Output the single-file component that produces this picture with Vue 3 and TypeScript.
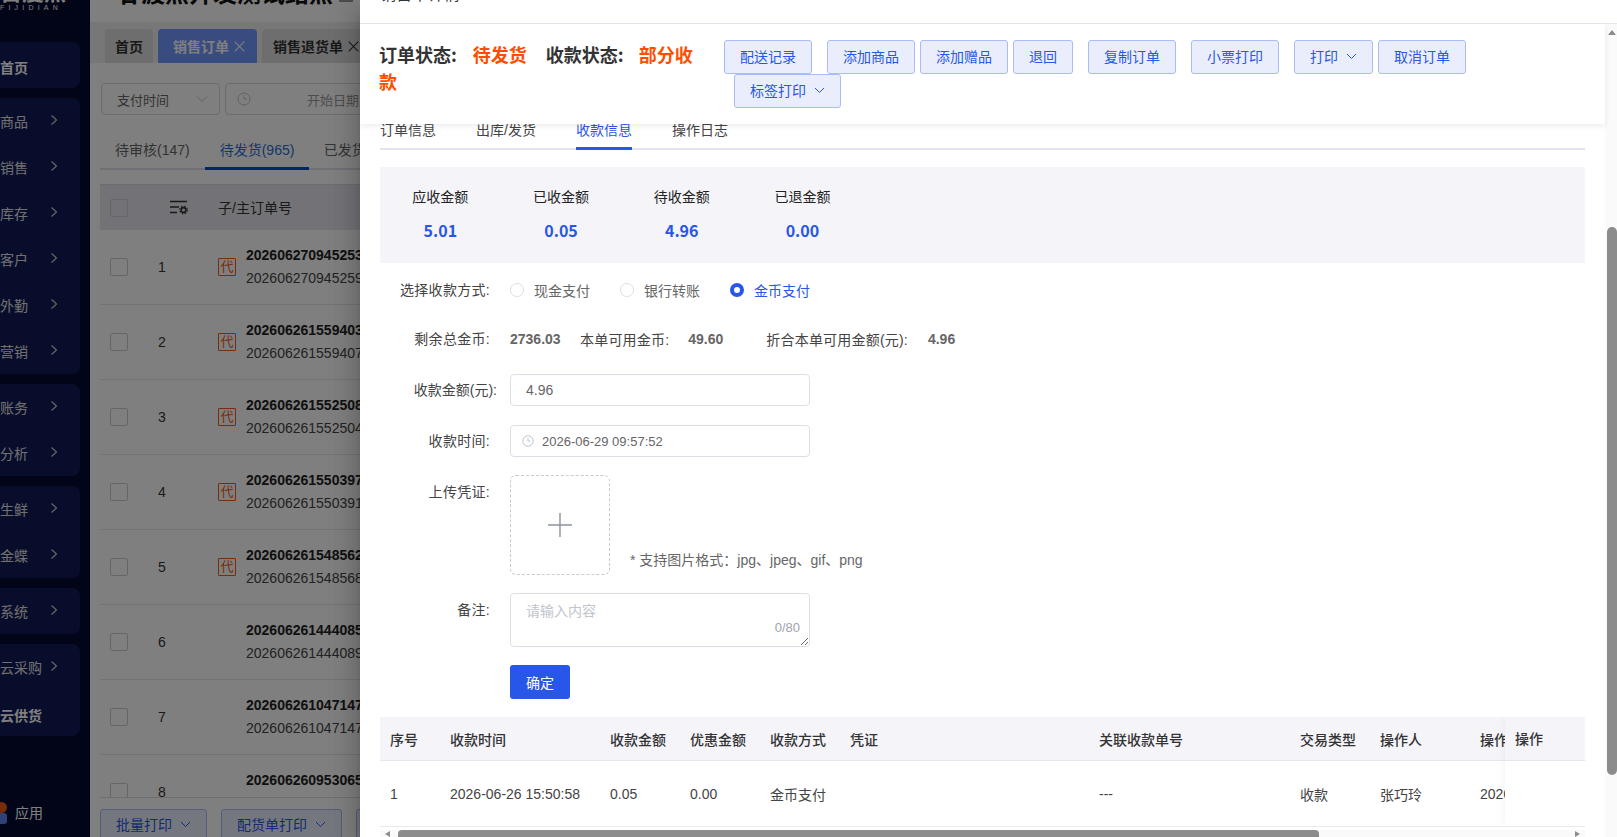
<script setup lang="ts">
const menuGroups: { label: string; arrow: boolean; bold?: boolean }[][] = [
  [{ label: '首页', arrow: false, bold: true }],
  ['商品', '销售', '库存', '客户', '外勤', '营销'].map((label) => ({ label, arrow: true })),
  ['账务', '分析'].map((label) => ({ label, arrow: true })),
  ['生鲜', '金蝶'].map((label) => ({ label, arrow: true })),
  [{ label: '系统', arrow: true }],
  [
    { label: '云采购', arrow: true },
    { label: '云供货', arrow: false, bold: true },
  ],
]

const orders = [
  { id: 1, agent: true, main: '202606270945253', sub: '202606270945259' },
  { id: 2, agent: true, main: '202606261559403', sub: '202606261559407' },
  { id: 3, agent: true, main: '202606261552508', sub: '202606261552504' },
  { id: 4, agent: true, main: '202606261550397', sub: '202606261550391' },
  { id: 5, agent: true, main: '202606261548562', sub: '202606261548568' },
  { id: 6, agent: false, main: '202606261444085', sub: '202606261444089' },
  { id: 7, agent: false, main: '202606261047147', sub: '202606261047147' },
  { id: 8, agent: false, main: '202606260953065', sub: '202606260953061' },
]

const actions = [
  { text: '配送记录', cls: 'm0' },
  { text: '添加商品', cls: 'm15' },
  { text: '添加赠品', cls: 'm5' },
  { text: '退回', cls: 'm5' },
  { text: '复制订单', cls: 'm15' },
  { text: '小票打印', cls: 'm15' },
  { text: '打印', cls: 'm15', arrow: true },
  { text: '取消订单', cls: 'm5' },
  { text: '标签打印', cls: 'm10', arrow: true },
]

const summary = [
  { label: '应收金额', value: '5.01' },
  { label: '已收金额', value: '0.05' },
  { label: '待收金额', value: '4.96' },
  { label: '已退金额', value: '0.00' },
]

const columns = [
  { head: '序号', cell: '1', w: 60 },
  { head: '收款时间', cell: '2026-06-26 15:50:58', w: 160 },
  { head: '收款金额', cell: '0.05', w: 80 },
  { head: '优惠金额', cell: '0.00', w: 80 },
  { head: '收款方式', cell: '金币支付', w: 80 },
  { head: '凭证', cell: '', w: 249 },
  { head: '关联收款单号', cell: '---', w: 201 },
  { head: '交易类型', cell: '收款', w: 80 },
  { head: '操作人', cell: '张巧玲', w: 100 },
  { head: '操作时间', cell: '2026-06-26 15:50:58', w: 170 },
]
</script>

<template>
  <div class="page">
    <aside class="sidebar">
      <div class="logo">
        <div class="logo-mark">百度点</div>
        <div class="logo-sub">FIJIDIAN</div>
      </div>
      <div v-for="(group, g) in menuGroups" :key="g" class="menu-group">
        <div v-for="item in group" :key="item.label" class="menu-item" :class="{ bold: item.bold }">
          <span>{{ item.label }}</span>
          <svg v-if="item.arrow" class="menu-arrow" width="8" height="12" viewBox="0 0 8 12">
            <path d="M1.5 1.5 6.5 6 1.5 10.5" fill="none" stroke="currentColor" stroke-width="1.2" />
          </svg>
        </div>
      </div>
      <div class="apps">
        <span class="apps-icon"><i class="dot-a"></i><i class="dot-b"></i></span>
        <span>应用</span>
      </div>
    </aside>

    <main class="main">
      <div class="title-row">
        <h1 class="title">甘渡点开发测试结点</h1>
        <span class="title-dash"></span>
      </div>
      <div class="tabbar">
        <div class="page-tab home">首页</div>
        <div class="page-tab active">销售订单
          <svg width="11" height="11" viewBox="0 0 11 11"><path d="M.7.7 10.3 10.3M10.3.7.7 10.3" stroke="currentColor" stroke-width="1.1" fill="none" /></svg>
        </div>
        <div class="page-tab">销售退货单
          <svg width="11" height="11" viewBox="0 0 11 11"><path d="M.7.7 10.3 10.3M10.3.7.7 10.3" stroke="currentColor" stroke-width="1.1" fill="none" /></svg>
        </div>
      </div>
      <div class="filters">
        <div class="select">
          <span>支付时间</span>
          <svg width="12" height="8" viewBox="0 0 12 8"><path d="M1 1.5 6 6.5 11 1.5" fill="none" stroke="#c0c4cc" stroke-width="1" /></svg>
        </div>
        <div class="date">
          <svg width="14" height="14" viewBox="0 0 14 14"><circle cx="7" cy="7" r="6" fill="none" stroke="#c0c4cc" /><path d="M7 3.5V7H10" fill="none" stroke="#c0c4cc" /></svg>
          <span>开始日期</span>
        </div>
      </div>
      <div class="subtabs">
        <div class="subtab">待审核(147)</div>
        <div class="subtab on">待发货(965)</div>
        <div class="subtab">已发货(1208)</div>
      </div>
      <div class="list-head">
        <span class="check"></span>
        <svg class="set-icon" width="18" height="15" viewBox="0 0 18 15">
          <path d="M0 1.5H17M0 7H9M0 12.5H7" stroke="#333" stroke-width="1.4" fill="none" />
          <circle cx="13.5" cy="10" r="2.4" fill="none" stroke="#333" stroke-width="1.6" />
          <circle cx="13.5" cy="10" r="3.8" fill="none" stroke="#333" stroke-width="1.2" stroke-dasharray="1.5 1.5" />
        </svg>
        <span class="list-col">子/主订单号</span>
      </div>
      <div class="list">
        <div v-for="o in orders" :key="o.id" class="list-row">
          <span class="check"></span>
          <span class="row-no">{{ o.id }}</span>
          <span class="badge-slot"><span v-if="o.agent" class="badge">代</span></span>
          <div class="nums">
            <div class="num-main">{{ o.main }}</div>
            <div class="num-sub">{{ o.sub }}</div>
          </div>
        </div>
      </div>
      <div class="bottom-bar">
        <div class="plain-btn w107">批量打印
          <svg width="11" height="7" viewBox="0 0 11 7"><path d="M1 1 5.5 5.5 10 1" fill="none" stroke="currentColor" /></svg>
        </div>
        <div class="plain-btn w121">配货单打印
          <svg width="11" height="7" viewBox="0 0 11 7"><path d="M1 1 5.5 5.5 10 1" fill="none" stroke="currentColor" /></svg>
        </div>
        <div class="plain-btn w107">导出</div>
      </div>
    </main>

    <div class="mask"></div>

    <section class="drawer">
      <div class="drawer-title"><span>销售单详情</span></div>
      <header class="status-bar">
        <div class="status-text">
          <span>订单状态:</span><b class="hot h1">待发货</b><span>收款状态:</span><b class="hot h2">部分收</b><b class="hot">款</b>
        </div>
        <div class="actions">
          <button v-for="a in actions" :key="a.text" type="button" class="act" :class="a.cls">
            {{ a.text }}
            <svg v-if="a.arrow" width="11" height="7" viewBox="0 0 11 7"><path d="M1 1 5.5 5.5 10 1" fill="none" stroke="currentColor" /></svg>
          </button>
        </div>
      </header>

      <div class="drawer-body">
        <nav class="tabs">
          <span class="tab">订单信息</span>
          <span class="tab">出库/发货</span>
          <span class="tab on">收款信息</span>
          <span class="tab">操作日志</span>
        </nav>

        <div class="summary">
          <div v-for="s in summary" :key="s.label" class="sum-item">
            <div class="sum-label">{{ s.label }}</div>
            <div class="sum-value">{{ s.value }}</div>
          </div>
        </div>

        <div class="form-row r-radio">
          <label class="f-label">选择收款方式:</label>
          <span class="radio"></span><span class="radio-text w-a">现金支付</span>
          <span class="radio"></span><span class="radio-text w-b">银行转账</span>
          <span class="radio checked"></span><span class="radio-text blue">金币支付</span>
        </div>

        <div class="form-row r-info">
          <label class="f-label">剩余总金币:</label>
          <b class="info-val v1">2736.03</b>
          <span class="info-label">本单可用金币:</span>
          <b class="info-val v2">49.60</b>
          <span class="info-label">折合本单可用金额(元):</span>
          <b class="info-val v3">4.96</b>
        </div>

        <div class="form-row r-amount">
          <label class="f-label wide">收款金额(元):</label>
          <input class="text-input" readonly value="4.96" />
        </div>

        <div class="form-row r-time">
          <label class="f-label">收款时间:</label>
          <div class="time-box">
            <svg width="12" height="12" viewBox="0 0 12 12"><circle cx="6" cy="6" r="5.2" fill="none" stroke="#c0c4cc" /><path d="M6 3V6H8.6" fill="none" stroke="#c0c4cc" /></svg>
            <span>2026-06-29 09:57:52</span>
          </div>
        </div>

        <div class="form-row r-upload">
          <label class="f-label top">上传凭证:</label>
          <div class="upload">
            <svg width="26" height="26" viewBox="0 0 26 26"><path d="M13 1V25M1 13H25" stroke="#8c939d" stroke-width="1.4" fill="none" /></svg>
          </div>
          <span class="hint">* 支持图片格式：jpg、jpeg、gif、png</span>
        </div>

        <div class="form-row r-remark">
          <label class="f-label top">备注:</label>
          <div class="area-wrap">
            <textarea class="area" placeholder="请输入内容"></textarea>
            <span class="count">0/80</span>
          </div>
        </div>

        <div class="form-row r-submit">
          <button type="button" class="confirm">确定</button>
        </div>

        <div class="table">
          <div class="t-head">
            <div v-for="c in columns" :key="c.head" class="t-cell" :style="{ width: c.w + 'px' }">{{ c.head }}</div>
          </div>
          <div class="t-row">
            <div v-for="c in columns" :key="c.head" class="t-cell" :style="{ width: c.w + 'px' }">{{ c.cell }}</div>
          </div>
          <div class="t-fixed">
            <div class="fixed-head">操作</div>
          </div>
        </div>

        <div class="h-scroll">
          <i class="h-arrow left"></i>
          <div class="h-thumb"></div>
          <i class="h-arrow right"></i>
        </div>
      </div>

      <div class="v-scroll">
        <i class="v-arrow"></i>
        <div class="v-thumb"></div>
      </div>
    </section>
  </div>
</template>

<style>
html, body { margin: 0; padding: 0; overflow: hidden; }
</style>

<style scoped>
* { box-sizing: border-box; }
.page {
  position: relative;
  display: flex;
  width: 1617px;
  height: 837px;
  overflow: hidden;
  background: #fff;
  font-family: "Liberation Sans", "Noto Sans CJK SC", sans-serif;
  font-size: 14px;
  color: #333;
}

/* sidebar */
.sidebar {
  flex: none;
  width: 90px;
  height: 837px;
  background: #040830;
  display: flex;
  flex-direction: column;
  gap: 10px;
  padding-right: 10px;
  position: relative;
}
.logo { height: 32px; overflow: hidden; color: #fff; position: relative; }
.logo-mark { font-size: 22px; line-height: 22px; font-weight: 700; margin-top: -18px; }
.logo-sub { font-size: 7px; line-height: 8px; letter-spacing: 4.2px; }
.menu-group {
  background: #121a58;
  border-radius: 0 8px 8px 0;
  display: flex;
  flex-direction: column;
}
.menu-item {
  height: 46px;
  display: flex;
  align-items: center;
  color: #e0e0e0;
  font-size: 14px;
  position: relative;
}
.menu-item.bold { font-weight: 700; color: #fff; padding-top: 4px; }
.menu-arrow { position: absolute; left: 50px; top: 16px; color: #ccc; }
.apps {
  position: absolute;
  left: 0;
  top: 802px;
  display: flex;
  align-items: center;
  gap: 8px;
  color: #fff;
  font-size: 14px;
  line-height: 22px;
}
.apps-icon { width: 7px; height: 22px; position: relative; display: block; overflow: hidden; }
.dot-a { position: absolute; right: 0; top: 0; width: 11px; height: 11px; border-radius: 50%; background: #f05a10; }
.dot-b { position: absolute; right: 0; top: 11px; width: 11px; height: 11px; border-radius: 3px; background: #5a86f0; }

/* main page behind the mask */
.main { flex: none; width: 1527px; display: flex; flex-direction: column; height: 837px; overflow: hidden; }
.title-row { height: 22px; display: flex; align-items: flex-end; padding-left: 27px; overflow: hidden; flex: none; position: relative; }
.title {
  margin: 0;
  font-size: 24px;
  line-height: 28px;
  font-weight: 700;
  color: #111;
  position: relative;
  top: -14px;
  flex: none;
}
.title-dash { width: 14px; height: 2px; background: #999; position: absolute; left: 249px; top: 0; }
.tabbar {
  flex: none;
  height: 41px;
  background: #eee;
  padding: 7px 0 0 15px;
  display: flex;
  gap: 5px;
}
.page-tab {
  height: 34px;
  padding: 0 10px 0 11px;
  background: #ddd;
  border-radius: 4px 4px 0 0;
  font-weight: 700;
  color: #333;
  display: flex;
  align-items: center;
  gap: 5px;
  white-space: nowrap;
  flex: none;
}
.page-tab.home { width: 48px; padding: 0 0 0 10px; }
.page-tab.active { background: #7099ff; color: #fff; padding: 0 11px 0 15px; width: 99px; }
.page-tab svg { flex: none; }
.filters { flex: none; display: flex; gap: 5px; padding: 20px 0 0 11px; height: 52px; }
.select {
  width: 119px;
  height: 32px;
  border: 1px solid #d8d8dc;
  border-radius: 4px;
  display: flex;
  align-items: center;
  justify-content: space-between;
  padding: 0 11px 0 15px;
  font-size: 13px;
  color: #666;
}
.date {
  width: 400px;
  height: 32px;
  border: 1px solid #d8d8dc;
  border-radius: 4px;
  display: flex;
  align-items: center;
  padding-left: 11px;
  font-size: 13px;
  color: #999;
  gap: 56px;
}
.subtabs {
  flex: none;
  margin: 18px 0 0 10px;
  height: 37px;
  display: flex;
  border-bottom: 2px solid #dde0e8;
  width: 1400px;
}
.subtab { height: 37px; padding: 0 15px; line-height: 34px; font-size: 14px; color: #666; white-space: nowrap; }
.subtab.on { color: #2c6cd8; border-bottom: 3px solid #0a4bd0; width: 104px; }
.list-head {
  flex: none;
  margin: 14px 0 0 10px;
  height: 46px;
  background: #e6e6ee;
  border-top: 1px solid #d8d8e0;
  display: flex;
  align-items: center;
  padding-left: 10px;
  width: 1400px;
}
.check { width: 18px; height: 18px; border: 1px solid #ccc; border-radius: 2px; background: transparent; flex: none; }
.set-icon { margin-left: 42px; }
.list-col { margin-left: 30px; font-size: 14px; color: #333; position: relative; top: -1px; }
.list { flex: none; height: 568px; margin-left: 10px; width: 1400px; overflow: hidden; border-bottom: 1px solid #ddd; }
.list-row {
  height: 75px;
  display: flex;
  align-items: center;
  padding-left: 10px;
  border-bottom: 1px solid #e6e6ec;
}
.row-no { width: 90px; padding-left: 30px; flex: none; color: #333; }
.badge-slot { width: 28px; flex: none; }
.badge {
  display: block;
  width: 18px;
  height: 18px;
  border: 1px solid #f05a10;
  color: #f05a10;
  font-size: 13px;
  line-height: 16px;
  text-align: center;
  border-radius: 1px;
}
.nums { white-space: nowrap; }
.num-main { font-weight: 700; color: #222; line-height: 23px; }
.num-sub { color: #444; line-height: 23px; }
.bottom-bar { flex: none; display: flex; gap: 14px; padding: 11px 0 0 10px; }
.plain-btn {
  height: 40px;
  border: 1px solid #a9bbf8;
  background: #eaeefc;
  color: #2856e8;
  border-radius: 3px;
  display: flex;
  align-items: center;
  justify-content: center;
  gap: 8px;
  padding-bottom: 10px;
  flex: none;
}
.w107 { width: 107px; }
.w121 { width: 121px; }

.mask { position: absolute; inset: 0; background: rgba(0, 0, 0, 0.5); }

/* drawer */
.drawer {
  position: absolute;
  left: 360px;
  top: 0;
  width: 1257px;
  height: 837px;
  background: #fff;
  box-shadow: 0 8px 10px -5px rgba(0,0,0,.2), 0 16px 24px 2px rgba(0,0,0,.14), 0 6px 30px 5px rgba(0,0,0,.12);
  overflow: hidden;
}
.drawer-title {
  height: 24px;
  border-bottom: 1px solid #e6e6ef;
  width: 1257px;
  overflow: hidden;
  position: relative;
}
.drawer-title span { position: absolute; top: -16px; left: 20px; font-size: 16px; line-height: 22px; color: #333; }
.status-bar {
  position: relative;
  z-index: 2;
  background: #fff;
  width: 1245px;
  height: 100px;
  padding: 16px 0 0 19px;
  display: flex;
  align-items: flex-start;
  box-shadow: 0 2px 6px rgba(0, 0, 0, 0.08);
}
.status-text {
  flex: none;
  width: 325px;
  margin-right: 20px;
  padding-top: 1px;
  font-family: "Noto Sans CJK SC", "Liberation Sans", sans-serif;
  font-size: 18px;
  font-weight: 700;
  line-height: 27px;
  color: #333;
}
.hot { color: #ff4d00; font-weight: 700; }
.h1 { margin: 0 19px 0 16px; }
.h2 { margin-left: 15px; }
.actions { flex: none; width: 770px; display: flex; flex-wrap: wrap; align-items: flex-start; }
.act {
  height: 34px;
  padding: 0 15px 2px;
  background: #eaeefc;
  border: 1px solid #a9bbf8;
  border-radius: 3px;
  color: #2856e8;
  font-family: inherit;
  font-size: 14px;
  display: inline-flex;
  align-items: center;
  gap: 8px;
}
.m0 { margin-left: 0; }
.m5 { margin-left: 5px; }
.m10 { margin-left: 10px; }
.m15 { margin-left: 15px; }

.drawer-body { padding: 0 20px 0 20px; width: 1245px; }
.tabs { display: flex; gap: 40px; height: 26px; border-bottom: 2px solid #e1e3ee; }
.tab {
  height: 26px;
  line-height: 12px;
  font-size: 14px;
  color: #444;
  white-space: nowrap;
}
.tab.on { color: #2856e8; border-bottom: 3px solid #2856e8; }
.summary {
  margin-top: 17px;
  height: 96px;
  background: #f4f4f9;
  display: flex;
}
.sum-item { width: 120.7px; text-align: center; padding-top: 20px; }
.sum-label { line-height: 20px; font-size: 14px; color: #222; }
.sum-value {
  margin-top: 11px;
  line-height: 24px;
  font-family: "Noto Sans CJK SC", "Liberation Sans", sans-serif;
  font-size: 16px;
  font-weight: 700;
  color: #2856e8;
}
.form-row { display: flex; align-items: center; font-size: 14px; color: #666; }
.f-label { flex: none; width: 110px; margin-right: 20px; text-align: right; color: #444; font-size: 14px; line-height: 20px; white-space: nowrap; letter-spacing: 0.3px; }
.f-label.wide { width: 117px; margin-right: 13px; letter-spacing: 0; }
.f-label.top { align-self: flex-start; padding-top: 7px; }
.r-radio { margin-top: 17px; height: 20px; }
.radio { width: 14px; height: 14px; border-radius: 50%; border: 1px solid #dcdfe6; background: #fff; flex: none; margin-right: 10px; }
.radio.checked { border: 4px solid #2856e8; }
.radio-text { font-size: 14px; color: #666; white-space: nowrap; }
.radio-text.blue { color: #2856e8; }
.w-a { width: 86px; }
.w-b { width: 86px; }
.r-info { margin-top: 29px; height: 20px; }
.info-val { font-weight: 700; font-size: 14px; color: #666; }
.info-label { color: #444; font-size: 14px; white-space: nowrap; letter-spacing: 0.2px; }
.v1 { width: 70px; }
.v2 { width: 78px; margin-left: 19px; }
.v3 { margin-left: 20px; }
.r-amount { margin-top: 25px; }
.text-input {
  width: 300px;
  height: 32px;
  border: 1px solid #dcdfe6;
  border-radius: 4px;
  padding: 0 15px;
  outline: none;
  font-family: inherit;
  font-size: 14px;
  color: #666;
  background: #fff;
}
.r-time { margin-top: 19px; }
.time-box {
  width: 300px;
  height: 32px;
  border: 1px solid #dcdfe6;
  border-radius: 4px;
  display: flex;
  align-items: center;
  padding-left: 11px;
  gap: 8px;
  color: #666;
  font-size: 13px;
}
.r-upload { margin-top: 18px; align-items: flex-start; }
.upload {
  width: 100px;
  height: 100px;
  border: 1px dashed #c8cad2;
  border-radius: 6px;
  display: flex;
  align-items: center;
  justify-content: center;
  flex: none;
}
.hint { margin: 76px 0 0 20px; line-height: 18px; font-size: 14px; color: #666; white-space: nowrap; }
.r-remark { margin-top: 18px; align-items: flex-start; }
.area-wrap { position: relative; width: 300px; height: 54px; }
.area {
  display: block;
  width: 300px;
  height: 54px;
  border: 1px solid #dcdfe6;
  border-radius: 4px;
  padding: 8px 15px;
  font-family: inherit;
  font-size: 14px;
  line-height: 18px;
  color: #666;
  outline: none;
}
.area::placeholder { color: #c0c4cc; opacity: 1; }
.count { position: absolute; right: 10px; bottom: 11px; font-size: 13px; line-height: 16px; color: #a0a4ac; }
.r-submit { margin-top: 18px; padding-left: 130px; }
.confirm {
  width: 60px;
  height: 34px;
  background: #2856e8;
  border: 0;
  border-radius: 3px;
  color: #fff;
  font-family: inherit;
  font-size: 14px;
}
.table { position: relative; margin-top: 18px; height: 110px; overflow: hidden; border-bottom: 1px solid #e8e9ef; }
.t-head { display: flex; height: 44px; background: #f4f4f9; border-bottom: 1px solid #e4e7ee; width: 1400px; }
.t-row { display: flex; height: 65px; width: 1400px; }
.t-cell {
  flex: none;
  padding-left: 10px;
  display: flex;
  align-items: center;
  white-space: nowrap;
  overflow: hidden;
  font-size: 14px;
  color: #444;
}
.t-head .t-cell { font-weight: 500; color: #333; }
.t-fixed {
  position: absolute;
  right: 0;
  top: 0;
  bottom: 0;
  width: 80px;
  background: #fff;
  box-shadow: -2px 0 6px rgba(0, 0, 0, 0.04);
}
.fixed-head {
  height: 44px;
  background: #f4f4f9;
  border-bottom: 1px solid #e4e7ee;
  padding-left: 10px;
  line-height: 44px;
  font-size: 14px;
  font-weight: 500;
  color: #333;
}
.h-scroll { position: relative; margin-top: 3px; height: 7px; background: #fafafa; }
.h-thumb { position: absolute; left: 18px; top: 0; width: 921px; height: 7px; background: #8c8c8c; border-radius: 4px 4px 0 0; }
.h-arrow { position: absolute; top: 1px; width: 0; height: 0; border-top: 3px solid transparent; border-bottom: 3px solid transparent; }
.h-arrow.left { left: 5px; border-right: 5px solid #8c8c8c; }
.h-arrow.right { right: 5px; border-left: 5px solid #8c8c8c; }
.v-scroll { position: absolute; right: 0; top: 24px; bottom: 0; width: 12px; background: #fafafa; }
.v-arrow { position: absolute; left: 3px; top: 6px; width: 0; height: 0; border-left: 4px solid transparent; border-right: 4px solid transparent; border-bottom: 5px solid #8c8c8c; }
.v-thumb { position: absolute; right: 0; top: 203px; width: 10px; height: 548px; background: #8c8c8c; border-radius: 5px; }
</style>
